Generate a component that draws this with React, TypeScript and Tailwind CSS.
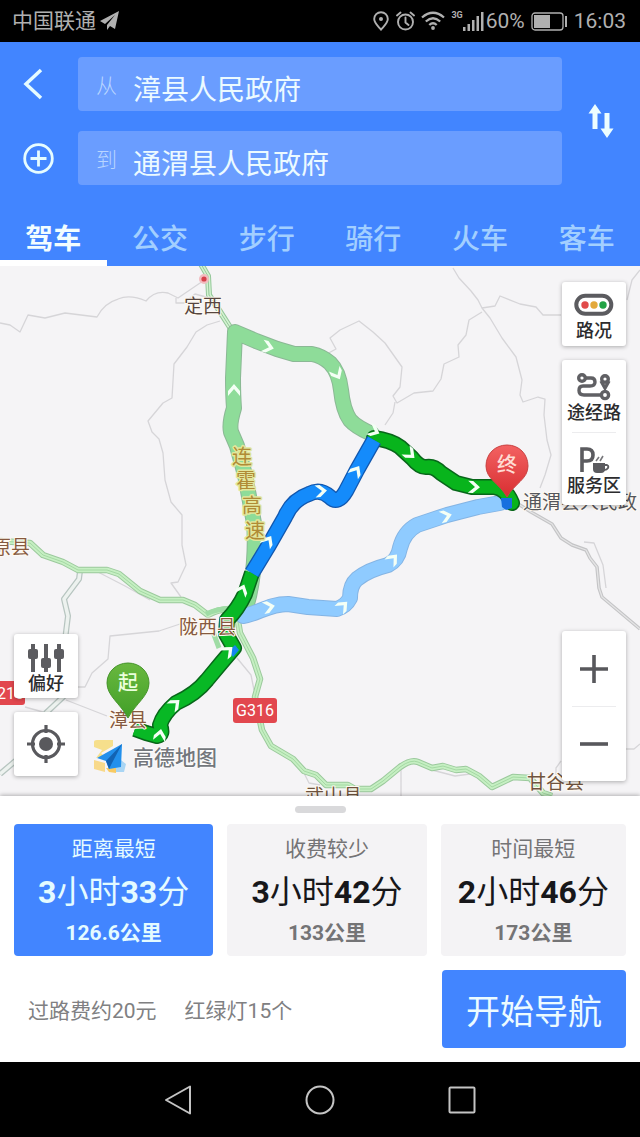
import { useState } from "react";

const TABS = ["驾车", "公交", "步行", "骑行", "火车", "客车"];

const ROUTES = [
  { title: "距离最短", hours: 3, minutes: 33, distance: "126.6公里" },
  { title: "收费较少", hours: 3, minutes: 42, distance: "133公里" },
  { title: "时间最短", hours: 2, minutes: 46, distance: "173公里" },
];

/* Direction arrows along the routes: x, y, heading in degrees */
const ARROWS: [number, number, number][] = [
  [268, 347, 14],
  [234, 390, -90],
  [337, 374, 62],
  [374, 431, 25],
  [410, 454, 42],
  [474, 487, 2],
  [321, 491, -5],
  [356, 471, -58],
  [268, 541, -58],
  [242, 590, -68],
  [269, 607, -12],
  [343, 606, -45],
  [393, 559, -48],
  [446, 516, -15],
  [228, 651, -42],
  [175, 704, -42],
  [160, 735, -80],
];

const LIGHT_GREEN =
  "M247 604 C254 580 256 545 254 523 L245 475 L237 446 L231 432 Q229 424 234 408 Q233 395 233 378 L235 332 M235 332 L256 341 L277 349 L294 354 H312 Q322 356 330 363 Q339 372 341 390 Q343 410 350 420 Q356 427 372 434";
const LIGHT_BLUE =
  "M243 616 C258 614 268 604 288 604 L308 607 L337 609 Q346 606 350 598 Q350 585 357 579 Q368 570 388 565 Q398 560 400 548 Q404 532 417 525 L447 515 L478 507 L500 503";
const GREEN_EAST =
  "M374 438 Q390 440 400 447 L412 458 Q420 468 427 467 Q434 466 441 473 L456 483 L472 487 L494 487 Q506 488 512 503";
const BLUE_ROUTE = "M374 440 L357 470 L346 491 Q338 505 330 497 Q320 488 309 494 Q292 500 285 517 L269 545 L252 573";
const GREEN_SOUTH =
  "M252 573 L245 594 Q238 609 227 620 L226 634 L234 648 L222 662 L207 680 Q196 694 176 703 Q163 714 160 725 Q164 735 157 736 L146 733 L135 729";

const HIGHWAY_WEST =
  "M0 541 L30 543 L43 555 L63 562 L78 570 L107 570 L119 574 L140 591 L160 600 L183 600 L195 605 L208 615 Q222 607 236 610 L240 633 L253 658 L260 679 L255 697 L262 730 L271 746 L293 759 L304 771 L316 775 L326 785 L348 785 L355 789 L371 789 L383 781 L400 767 Q411 759 418 762 L432 768 L443 766 L456 770 L466 769 L479 776 L492 787 L513 777 L530 778 L543 793 L552 796";

function StatusBar() {
  return (
    <div className="flex h-[42px] items-center justify-between bg-black pl-3 pr-3.5 text-[#b0b0b0]">
      <div className="flex items-center gap-1">
        <span className="text-[21px] leading-6">中国联通</span>
        <svg width="20" height="20" viewBox="0 0 20 20" aria-hidden="true">
          <path d="M19 0 L0 10 L5 13 L15 4 L7 14 V19 L10 15 L15 18 Z" fill="currentColor" />
        </svg>
      </div>
      <div className="flex items-center">
        <svg className="mr-[7px]" width="16" height="20" viewBox="0 0 16 20" fill="none" aria-hidden="true">
          <path d="M8 1.2 A6.8 6.8 0 0 0 1.2 8 C1.2 12 5 15 8 18.6 C11 15 14.8 12 14.8 8 A6.8 6.8 0 0 0 8 1.2 Z" stroke="currentColor" strokeWidth="1.9" />
          <circle cx="8" cy="8" r="2" fill="currentColor" />
        </svg>
        <svg className="mr-1.5" width="19" height="20" viewBox="0 0 19 20" fill="none" stroke="currentColor" strokeWidth="1.9" strokeLinecap="round" aria-hidden="true">
          <circle cx="9.500" cy="11" r="7.500" />
          <path d="M9.500 6.500 V11.500 L12.500 14 M1 4.500 L4.500 1.500 M18 4.500 L14.500 1.500" />
        </svg>
        <svg className="mr-1.5" width="24" height="20" viewBox="0 0 24 20" fill="none" stroke="currentColor" strokeWidth="2.300" aria-hidden="true">
          <path d="M1 6.500 Q12 -3 23 6.500 M4.800 10.500 Q12 4 19.200 10.500 M8.300 14 Q12 10.500 15.700 14" />
          <circle cx="12" cy="17" r="1.900" fill="currentColor" stroke="none" />
        </svg>
        <span className="self-start text-[9px] font-bold leading-3">3G</span>
        <svg className="mr-0.5" width="21" height="20" viewBox="0 0 21 20" fill="currentColor" aria-hidden="true">
          <path d="M0 16h2.500v4H0z M4.500 13h2.500v7H4.500z M9 9h2.500v11H9z M13.500 5h2.500v15h-2.500z M18 1h2.500v19H18z" />
        </svg>
        <span className="mr-1.5 text-[21px] leading-6">60%</span>
        <svg className="mr-1.5" width="37" height="20" viewBox="0 0 37 20" aria-hidden="true">
          <rect x="1" y="2" width="31" height="17" rx="3" fill="none" stroke="currentColor" strokeWidth="1.300" />
          <rect x="3" y="4" width="16" height="13" fill="currentColor" />
          <path d="M34 5 h2 v11 h-2 z" fill="currentColor" />
        </svg>
        <span className="text-[21px] leading-6">16:03</span>
      </div>
    </div>
  );
}

function PlaceField({ id, label, defaultValue }: { id: string; label: string; defaultValue: string }) {
  return (
    <div className="flex h-[54px] items-center gap-4 rounded bg-[#6a9dff] pl-[18px] pr-3">
      <label htmlFor={id} className="pt-1 text-[21px] font-light leading-8 text-[#b9d6ff]">
        {label}
      </label>
      <input
        id={id}
        defaultValue={defaultValue}
        className="h-full min-w-0 flex-1 bg-transparent pt-2 text-[28px] text-[#ecfaff] outline-none"
      />
    </div>
  );
}

function Header() {
  const [active, setActive] = useState(0);
  return (
    <header className="bg-[#4285ff] pt-[15px]">
      <div className="flex">
        <div className="flex w-[78px] flex-col gap-5">
          <button aria-label="返回" className="flex h-[54px] items-center pl-[22px]">
            <svg width="22" height="32" viewBox="0 0 22 32" fill="none" aria-hidden="true">
              <path d="M19 2 L4 16 L19 30" stroke="#e6fcff" strokeWidth="3.500" />
            </svg>
          </button>
          <button aria-label="添加途经点" className="flex h-[54px] items-center pl-[23px]">
            <svg width="31" height="31" viewBox="0 0 31 31" fill="none" stroke="#e6fcff" strokeWidth="2.800" aria-hidden="true">
              <circle cx="15.500" cy="15.500" r="13.800" />
              <path d="M15.500 7.500 V23.500 M7.500 15.500 H23.500" />
            </svg>
          </button>
        </div>
        <div className="flex min-w-0 flex-1 flex-col gap-5">
          <PlaceField id="from" label="从" defaultValue="漳县人民政府" />
          <PlaceField id="to" label="到" defaultValue="通渭县人民政府" />
        </div>
        <button aria-label="交换起点和终点" className="flex w-[78px] items-center justify-center">
          <svg width="26" height="34" viewBox="0 0 26 34" fill="#ecfdff" aria-hidden="true">
            <path d="M7 0 L13.500 9.500 H9.500 V25 H4.500 V9.500 H0.500 Z" />
            <path d="M19 34 L25.500 24.500 H21.500 V9 H16.500 V24.500 H12.500 Z" />
          </svg>
        </button>
      </div>
      <div role="tablist" className="mt-[25px] flex">
        {TABS.map((tab, i) => (
          <button
            key={tab}
            role="tab"
            aria-selected={i === active}
            onClick={() => setActive(i)}
            className={
              i === active
                ? "h-14 flex-1 border-b-[6px] border-white pt-2.5 text-[28px] font-bold leading-8 text-[#f2fdff]"
                : "h-14 flex-1 border-b-[6px] border-transparent pt-2.5 text-[28px] font-medium leading-8 text-[#a2cfff]"
            }
          >
            {tab}
          </button>
        ))}
      </div>
    </header>
  );
}

function MapDrawing() {
  return (
    <svg
      className="absolute inset-0 h-full w-full"
      viewBox="0 266 640 530"
      preserveAspectRatio="xMidYMid slice"
      fill="none"
      strokeLinejoin="round"
      role="img"
      aria-label="路线地图"
    >
      <rect x="0" y="266" width="640" height="530" fill="#f5f4f6" />

      {/* Minor roads and rivers */}
      <g stroke="#d6d5d8" strokeWidth="1.300">
        <path d="M0 323 L10 325 L20 332 L28 315 L45 318 L65 313 L97 317 Q104 303 118 299 Q130 294 146 301 Q155 290 168 293 L178 298 L203 281 M176 298 V303 H184 L195 294 L206 297" />
        <path d="M220 321 L207 325 L196 332 L187 347 L174 364 L172 398 L163 403 L148 421 L152 432 L159 439 L163 453 L165 480 L171 502 L182 515 L182 545 L186 565 L178 582 L171 583 L181 597" />
        <path d="M453 268 L459 278 L471 291 L478 300 L482 308 L490 318 L502 338 L516 357 L522 380 L520 395 L523 402 L538 397 L545 399 L544 415 L547 440 L551 455 L545 475 L540 488" />
        <path d="M482 308 L495 306 L500 296 L520 304 L536 307 L543 315 L561 315" />
        <path d="M482 312 L469 320 L466 335 L458 345 L459 357 L444 364 L441 379 L433 391 L414 393 L397 403 L393 396 L400 387 L402 367 L385 343 L373 332 L359 321 L340 330 L330 338 L336 349 L325 355 M395 402 L393 413 L385 425" />
        <path d="M640 270 L632 280 L627 300" />
        <path d="M180 624 L159 631 L110 636 L108 659 L92 673 L85 687 L74 687 M66 700 L107 716 M96 571 L125 586 L150 600 M25 707 L43 712 M237 658 L251 675 L254 690" />
        <path d="M401 770 V796 M432 770 L455 776 L470 774 M626 749 H634 L640 744 M561 761 L556 768 V780 M304 773 L309 783 L320 785" />
        <path d="M584 542 L594 543 L603 565 L606 588" />
      </g>
      <path d="M515 502 L531 512 L552 524 L561 538 L572 545 L586 550 L590 558 L597 567 L599 588 L602 597 L640 629" stroke="#c4c4c6" strokeWidth="3.500" />
      <path d="M515 502 L531 512 L552 524 L561 538 L572 545 L586 550 L590 558 L597 567 L599 588 L602 597 L640 629" stroke="#e4e4e5" strokeWidth="1.300" />
      <path d="M80 571 L79 579 L64 599 L68 616 L65 640 L64 696 L46 713 L30 750 L13 763 L0 774" stroke="#b7c5c0" strokeWidth="6" />
      <path d="M80 571 L79 579 L64 599 L68 616 L65 640 L64 696 L46 713 L30 750 L13 763 L0 774" stroke="#edf2ef" strokeWidth="3.500" />

      {/* Highways */}
      <path d={HIGHWAY_WEST} stroke="#9bc99c" strokeWidth="6.500" />
      <path d={HIGHWAY_WEST} stroke="#c6efc3" strokeWidth="4.500" />
      <path d={HIGHWAY_WEST} stroke="#a4d9a3" strokeWidth="1" />
      <path d="M201 264 L208 276 L209 295 L219 310 L233 332" stroke="#95c79a" strokeWidth="6" />
      <path d="M201 264 L208 276 L209 295 L219 310 L233 332" stroke="#d3f3d1" strokeWidth="4" />
      <path d="M201 264 L208 276 L209 295 L219 310 L233 332" stroke="#95c79a" strokeWidth="1" />
      <path d="M206 614 Q216 609 232 608 M213 632 L219 648" stroke="#9fdca5" strokeWidth="5" />

      {/* Alternative routes */}
      <g strokeLinecap="round">
        <path d={LIGHT_GREEN} stroke="#8bb895" strokeWidth="16" />
        <path d={LIGHT_GREEN} stroke="#8edc99" strokeWidth="14" />
        <path d={LIGHT_BLUE} stroke="#84b4e4" strokeWidth="16" />
        <path d={LIGHT_BLUE} stroke="#8fcbff" strokeWidth="14" />
      </g>

      {/* Selected route */}
      <path d={GREEN_EAST} stroke="#08661a" strokeWidth="16" strokeLinecap="round" />
      <path d={GREEN_EAST} stroke="#08b41c" strokeWidth="13" strokeLinecap="round" />
      <path d={GREEN_SOUTH} stroke="#08661a" strokeWidth="16" />
      <path d={GREEN_SOUTH} stroke="#08b825" strokeWidth="13" />
      <path d={BLUE_ROUTE} stroke="#1257ae" strokeWidth="16" />
      <path d={BLUE_ROUTE} stroke="#148bfb" strokeWidth="13.500" />
      <path d="M235 645 L239 650 L233 657 L229 651 Z" fill="#1685f0" />
      <path d="M501 498 H512 V508 L506 510 L502 507 Z" fill="#1670df" />

      {ARROWS.map(([x, y, angle]) => (
        <path key={`${x}-${y}`} d="M-6 -6 L-1 -6 L6 0 L-1 6 L-6 6 L1 0 Z" fill="#f4fff5" transform={`translate(${x} ${y}) rotate(${angle})`} />
      ))}

      <circle cx="204" cy="279" r="5" fill="#f2bcc0" />
      <circle cx="204" cy="279" r="2.600" fill="#d6404a" />

      {/* Start and end pins */}
      <defs>
        <linearGradient id="startPin" x1="0" y1="0" x2="0" y2="1">
          <stop offset="0" stopColor="#69b83f" />
          <stop offset="1" stopColor="#419f28" />
        </linearGradient>
        <linearGradient id="endPin" x1="0" y1="0" x2="0" y2="1">
          <stop offset="0" stopColor="#f36262" />
          <stop offset="1" stopColor="#d82e31" />
        </linearGradient>
      </defs>

      {/* Place names */}
      <g fontSize="19" fill="#86593f" stroke="#fffaf2" strokeWidth="2" paintOrder="stroke">
        <text x="184" y="313" fill="#57463f">定西</text>
        <text x="-8" y="554">原县</text>
        <text x="179" y="634">陇西县</text>
        <text x="109" y="727">漳县</text>
        <text x="305" y="803" fill="#6f533e">武山县</text>
        <text x="527" y="789" fill="#6f533e">甘谷县</text>
        <text x="523" y="509" fill="#55565c">通渭县人民政</text>
      </g>
      <g fontSize="20" fill="#b08b35" stroke="#e2e79c" strokeWidth="3" paintOrder="stroke">
        <text x="232" y="464">连</text>
        <text x="236" y="488">霍</text>
        <text x="242" y="513">高</text>
        <text x="245" y="538">速</text>
      </g>

      {/* Road shields */}
      <rect x="233" y="698" width="44" height="25" rx="3" fill="#e2474e" />
      <text x="255" y="716" fontSize="16" fill="#fff" textAnchor="middle">G316</text>
      <rect x="-20" y="681" width="45" height="24" rx="3" fill="#e2474e" />
      <text x="-14" y="699" fontSize="16" fill="#fff">G210</text>

      <path d="M128 663 C116 663 107 672 107 683 C107 696 120 703 128 718 C136 703 149 696 149 683 C149 672 140 663 128 663 Z" fill="url(#startPin)" stroke="#47952d" />
      <text x="128" y="690" fontSize="20" fontWeight="500" fill="#eaffdc" textAnchor="middle">起</text>
      <path d="M507 445 C495 445 486 454 486 466 C486 479 499 483 507 497 C515 483 528 479 528 466 C528 454 519 445 507 445 Z" fill="url(#endPin)" stroke="#c94343" />
      <text x="507" y="472" fontSize="20" fontWeight="500" fill="#ffdcd4" textAnchor="middle">终</text>

      {/* Map provider mark */}
      <path d="M94 742 Q94 740 97 740 H113 V746 L101 753 L104 756 L96 758 L102 750 L94 747 Z" fill="#f6df8c" />
      <path d="M94 760 L105 763 V772 L94 769 Z" fill="#f8d98a" />
      <path d="M117 757 L126 764 L124 772 L116 772 L114 768 L120 765 Z" fill="#a9d5f4" />
      <path d="M106 768 L116 768 V773 L109 772 Z" fill="#f8ca63" />
      <path d="M122 744 L97 758 L106 761 L109 769 L121 767 Z" fill="#2290ec" />
      <path d="M122 744 L106 761 L109 769 L112 763 Z" fill="#1263b3" />
      <text x="133" y="765" fontSize="21" fontWeight="500" fill="#73777c" stroke="#fff" strokeWidth="1.500" paintOrder="stroke">高德地图</text>
    </svg>
  );
}

const tile = "rounded-[3px] bg-white shadow-[0_1px_4px_rgba(0,0,0,0.3)]";
const tileLabel = "text-[18px] font-medium leading-6 text-[#2c2c2e]";

function MapView() {
  return (
    <main className="relative min-h-[530px] flex-1 overflow-hidden">
      <MapDrawing />
      <div className="absolute bottom-5 left-3.5 flex w-16 flex-col gap-3.5">
        <button className={`${tile} flex h-16 flex-col items-center justify-end pb-0.5`}>
          <svg width="36" height="28" viewBox="0 0 36 28" fill="#5c5c60" aria-hidden="true">
            <path d="M3 0h4v28H3z M16 0h4v28h-4z M29 0h4v28h-4z" />
            <rect x="0" y="5" width="10" height="10" rx="2" />
            <rect x="13" y="14" width="10" height="10" rx="2" />
            <rect x="26" y="5" width="10" height="10" rx="2" />
          </svg>
          <span className={tileLabel}>偏好</span>
        </button>
        <button aria-label="定位" className={`${tile} flex h-16 items-center justify-center`}>
          <svg width="38" height="38" viewBox="0 0 38 38" fill="none" stroke="#59595d" strokeWidth="3.200" aria-hidden="true">
            <circle cx="19" cy="19" r="13.500" />
            <path d="M19 0 V8 M19 30 V38 M0 19 H8 M30 19 H38" />
            <circle cx="19" cy="19" r="7" fill="#59595d" stroke="none" />
          </svg>
        </button>
      </div>
      <div className="absolute bottom-[15px] right-3.5 top-4 flex w-16 flex-col justify-between">
        <div className="flex flex-col gap-3.5">
          <button className={`${tile} flex h-16 flex-col items-center justify-end pb-[3px]`}>
            <svg width="40" height="24" viewBox="0 0 40 24" aria-hidden="true">
              <rect x="2.300" y="2.800" width="35" height="18" rx="9" fill="#fff" stroke="#5b5b5f" strokeWidth="4" />
              <circle cx="11" cy="12" r="3.700" fill="#e14b4b" />
              <circle cx="20" cy="12" r="3.700" fill="#e3a93c" />
              <circle cx="29" cy="12" r="3.700" fill="#22a345" />
            </svg>
            <span className={`${tileLabel} mt-0.5`}>路况</span>
          </button>
          <div className={`${tile} flex flex-col`}>
            <button className="flex h-[72px] flex-col items-center justify-end pb-[7px]">
              <svg width="36" height="28" viewBox="0 0 36 28" fill="none" stroke="#606064" strokeWidth="3.400" aria-hidden="true">
                <circle cx="6" cy="5" r="3.300" />
                <path d="M9 5 H15 Q19 5 19 9 Q19 13 14 13 H7 Q3 13 3 17.500 Q3 22 8 22 H25" />
                <circle cx="29" cy="22" r="3.600" />
                <circle cx="29" cy="6" r="3.300" />
                <path d="M25 8 L29 15 L33 8" />
              </svg>
              <span className={tileLabel}>途经路</span>
            </button>
            <hr className="mx-2.5 border-[#ececee]" />
            <button className="flex h-[72px] flex-col items-center justify-end pb-[7px]">
              <svg width="32" height="28" viewBox="0 0 32 28" fill="none" aria-hidden="true">
                <path d="M4 26 V3 H9 Q15 3 15 9 Q15 15 9 15 H5" stroke="#5b5b5f" strokeWidth="3.600" />
                <path d="M15 17 H27 V23 Q27 27 23 27 H19 Q15 27 15 23 Z" fill="#5b5b5f" />
                <path d="M27 19 H29 Q31 20 30 22 Q29 24 26 24" stroke="#5b5b5f" strokeWidth="1.800" />
                <path d="M18 15 L21 11 M22 15 L25 10" stroke="#77777b" strokeWidth="1.600" />
              </svg>
              <span className={tileLabel}>服务区</span>
            </button>
          </div>
        </div>
        <div className={`${tile} flex flex-col`}>
          <button aria-label="放大" className="flex h-[75px] items-center justify-center">
            <svg width="28" height="28" viewBox="0 0 28 28" stroke="#58585c" strokeWidth="3.600" aria-hidden="true">
              <path d="M14 0 V28 M0 14 H28" />
            </svg>
          </button>
          <hr className="mx-2.5 border-[#ececee]" />
          <button aria-label="缩小" className="flex h-[74px] items-center justify-center">
            <svg width="28" height="28" viewBox="0 0 28 28" stroke="#58585c" strokeWidth="3.600" aria-hidden="true">
              <path d="M0 14 H28" />
            </svg>
          </button>
        </div>
      </div>
    </main>
  );
}

function RoutePanel() {
  const [selected, setSelected] = useState(0);
  return (
    <section className="relative bg-white px-3.5 pb-3.5 pt-2.5 shadow-[0_-1px_4px_rgba(0,0,0,0.28)]">
      <div className="mx-auto h-[7px] w-[51px] rounded-sm bg-[#d9d9db]" />
      <div className="mt-[11px] grid grid-cols-[199fr_199fr_185fr] gap-3.5">
        {ROUTES.map((route, i) => {
          const on = i === selected;
          return (
            <button
              key={route.title}
              aria-pressed={on}
              onClick={() => setSelected(i)}
              className={
                on
                  ? "flex h-[132px] flex-col items-center rounded bg-[#4285ff] pt-3 text-[#e4fbff]"
                  : "flex h-[132px] flex-col items-center rounded bg-[#f4f3f5] pt-3 text-[#747476]"
              }
            >
              <span className="text-[21px] leading-[26px]">{route.title}</span>
              <span className={on ? "mt-2.5 text-[32px] leading-10" : "mt-2.5 text-[32px] leading-10 text-[#17171a]"}>
                <b>{route.hours}</b>小时<b>{route.minutes}</b>分
              </span>
              <span className="mt-2 text-[21px] font-bold leading-[26px]">{route.distance}</span>
            </button>
          );
        })}
      </div>
      <div className="mt-3.5 flex items-center justify-between">
        <p className="flex gap-7 pl-3.5 pt-1 text-[21px] leading-8 text-[#808082]">
          <span>过路费约20元</span>
          <span>红绿灯15个</span>
        </p>
        <button className="h-[78px] w-[184px] rounded bg-[#4285ff] pt-1.5 text-[34px] text-[#ecfbff]">开始导航</button>
      </div>
    </section>
  );
}

function SystemNav() {
  return (
    <nav className="flex h-[75px] items-center justify-center gap-28 bg-black">
      <button aria-label="返回上一级">
        <svg width="30" height="30" viewBox="0 0 30 30" fill="none" stroke="#c4c4c4" strokeWidth="2" strokeLinejoin="round" aria-hidden="true">
          <path d="M27 1.500 V28.500 L3 15 Z" />
        </svg>
      </button>
      <button aria-label="主屏幕">
        <svg width="30" height="30" viewBox="0 0 30 30" fill="none" stroke="#c4c4c4" strokeWidth="2" aria-hidden="true">
          <circle cx="15" cy="15" r="13.500" />
        </svg>
      </button>
      <button aria-label="最近任务">
        <svg width="30" height="30" viewBox="0 0 30 30" fill="none" stroke="#c4c4c4" strokeWidth="2" aria-hidden="true">
          <rect x="2.500" y="2.500" width="25" height="25" rx="1" />
        </svg>
      </button>
    </nav>
  );
}

export default function App() {
  return (
    <div className="flex min-h-screen flex-col bg-white font-[Roboto,'Noto_Sans_CJK_SC',sans-serif]">
      <StatusBar />
      <Header />
      <MapView />
      <RoutePanel />
      <SystemNav />
    </div>
  );
}
